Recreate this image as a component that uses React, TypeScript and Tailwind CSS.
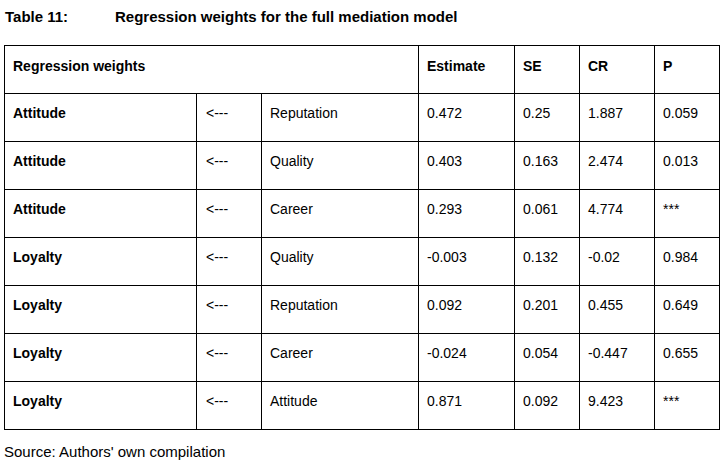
import React from "react";

const rows: [string, string, string, string, string, string, string][] = [
  ["Attitude", "<---", "Reputation", "0.472", "0.25", "1.887", "0.059"],
  ["Attitude", "<---", "Quality", "0.403", "0.163", "2.474", "0.013"],
  ["Attitude", "<---", "Career", "0.293", "0.061", "4.774", "***"],
  ["Loyalty", "<---", "Quality", "-0.003", "0.132", "-0.02", "0.984"],
  ["Loyalty", "<---", "Reputation", "0.092", "0.201", "0.455", "0.649"],
  ["Loyalty", "<---", "Career", "-0.024", "0.054", "-0.447", "0.655"],
  ["Loyalty", "<---", "Attitude", "0.871", "0.092", "9.423", "***"],
];

const cell = "h-[48px] border-r border-b border-black pl-2 pt-[11px] leading-[16px]";

export default function App() {
  return (
    <div
      className="w-[728px] h-[465px] bg-white text-black overflow-hidden"
      style={{ fontFamily: '"Liberation Sans", Arial, sans-serif' }}
    >
      <div className="flex pl-[5px] pt-2 text-[15px] font-bold leading-[17px]">
        <span className="w-[110px]">Table 11:</span>
        <span>Regression weights for the full mediation model</span>
      </div>
      <div className="ml-[4px] mt-[20px] w-[716px] grid grid-cols-[192px_65px_157px_96px_65px_75px_65px] border-l border-t border-black text-[14px]">
        <div className={`col-span-3 ${cell} font-bold pt-[12px]`}>Regression weights</div>
        <div className={`${cell} font-bold pt-[12px]`}>Estimate</div>
        <div className={`${cell} font-bold pt-[12px]`}>SE</div>
        <div className={`${cell} font-bold pt-[12px]`}>CR</div>
        <div className={`${cell} font-bold pt-[12px]`}>P</div>
        {rows.map((r, i) => (
          <React.Fragment key={i}>
            <div className={`${cell} font-bold`}>{r[0]}</div>
            <div className={`${cell} pl-[9px]`}>{r[1]}</div>
            <div className={cell}>{r[2]}</div>
            <div className={cell}>{r[3]}</div>
            <div className={cell}>{r[4]}</div>
            <div className={cell}>{r[5]}</div>
            <div className={cell}>{r[6]}</div>
          </React.Fragment>
        ))}
      </div>
      <div className="pl-[4px] mt-[13px] text-[15px] leading-[17px]">Source: Authors' own compilation</div>
    </div>
  );
}
